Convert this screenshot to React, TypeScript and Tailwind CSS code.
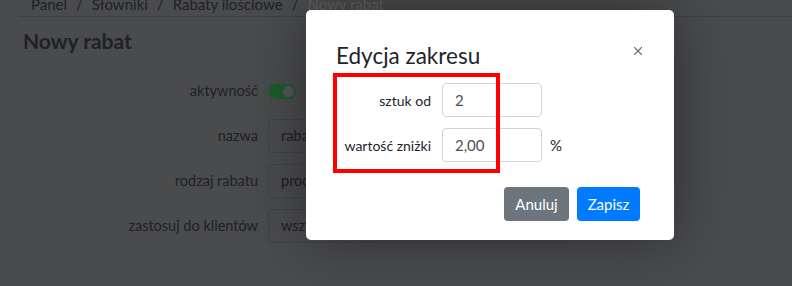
import { X } from 'lucide-react'

const ROWS = [
  { label: 'nazwa', value: 'rabat ilościowy' },
  { label: 'rodzaj rabatu', value: 'procentowy' },
  { label: 'zastosuj do klientów', value: 'wszyscy klienci' },
]

export default function App() {
  return (
    <div className="relative h-[286px] w-[792px] overflow-hidden bg-[#4a4b4d] font-['Lato',sans-serif] text-[#1f2125]">
      {/* breadcrumb */}
      <div className="ml-[18px] flex h-[17px] items-end border-b border-[#3e3f41] pb-[4px] pl-[13px] text-[15px] leading-none">
        <span>Panel</span>
        <span className="px-[9px]">/</span>
        <span>Słowniki</span>
        <span className="px-[9px]">/</span>
        <span>Rabaty ilościowe</span>
        <span className="px-[9px]">/</span>
        <span className="text-[#606266]">Nowy rabat</span>
      </div>

      <h1 className="ml-[23px] mt-[11px] text-[21px] font-bold leading-[26px]">Nowy rabat</h1>

      {/* form behind the backdrop */}
      <div className="mt-[20px] grid grid-cols-[240px_300px] gap-x-[10px] gap-y-[11px] pl-[18px] text-[14.5px]">
        <div className="flex h-[34px] items-center justify-end">aktywność</div>
        <div className="flex h-[34px] items-center">
          <div className="flex h-[15px] w-[28px] items-center justify-end rounded-full bg-[#1c5c2b] pr-[2px]">
            <div className="h-[11px] w-[11px] rounded-full bg-[#55565a]" />
          </div>
        </div>
        {ROWS.map((r) => (
          <div key={r.label} className="contents">
            <div className="flex h-[34px] items-center justify-end">{r.label}</div>
            <div className="flex h-[34px] items-center rounded-[4px] border border-[#414244] px-[12px]">{r.value}</div>
          </div>
        ))}
      </div>

      {/* modal */}
      <div className="absolute left-[306px] top-[10px] h-[230px] w-[368px] rounded-[5px] bg-white pl-[30px] pr-[34px] pt-[31px] text-[#212529] shadow-[0_0_60px_rgba(0,0,0,0.4)]">
        <button className="absolute right-[29px] top-[34px] text-[#6c757d]">
          <X size={14} strokeWidth={2} />
        </button>
        <h2 className="text-[22.5px] leading-[29px]">Edycja zakresu</h2>

        <div className="mt-[13px] flex flex-col gap-[11px] text-[14px]">
          <div className="flex items-center">
            <div className="w-[95px] text-right">sztuk od</div>
            <div className="ml-[11px] flex h-[34px] w-[100px] items-center rounded-[4px] border border-[#ced4da] px-[12px] text-[15px] text-[#495057]">2</div>
          </div>
          <div className="flex items-center">
            <div className="w-[95px] text-right">wartość zniżki</div>
            <div className="ml-[11px] flex h-[34px] w-[100px] items-center rounded-[4px] border border-[#ced4da] px-[12px] text-[15px] text-[#495057]">2,00</div>
            <div className="ml-[8px] text-[15px]">%</div>
          </div>
        </div>

        <div className="mt-[25px] flex justify-end gap-[8px] text-[15px] text-white">
          <button className="h-[34px] w-[65px] rounded-[4px] bg-[#6c757d]">Anuluj</button>
          <button className="h-[34px] w-[63px] rounded-[4px] bg-[#007bff]">Zapisz</button>
        </div>

        {/* red annotation frame */}
        <div className="absolute left-[27px] top-[63px] h-[100px] w-[167px] border-[4px] border-[#ff0000]" />
      </div>
    </div>
  )
}
